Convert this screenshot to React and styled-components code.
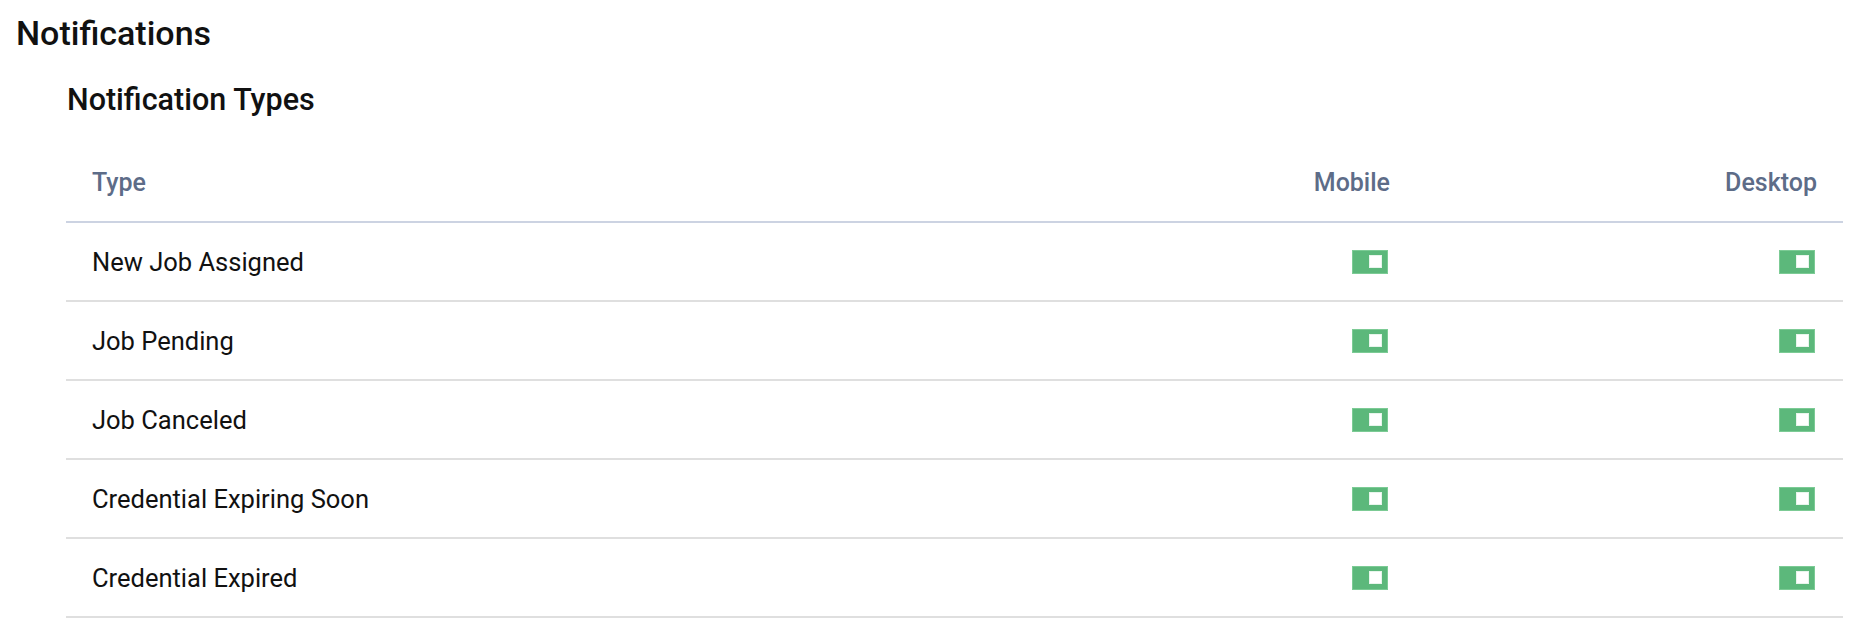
import styled, { createGlobalStyle } from "styled-components";

const GlobalStyle = createGlobalStyle`
  body {
    margin: 0;
    background: #fff;
    font-family: Roboto, "Liberation Sans", Arial, sans-serif;
    color: #111;
  }
`;

const types = [
  { name: "New Job Assigned", mobile: true, desktop: true },
  { name: "Job Pending", mobile: true, desktop: true },
  { name: "Job Canceled", mobile: true, desktop: true },
  { name: "Credential Expiring Soon", mobile: true, desktop: true },
  { name: "Credential Expired", mobile: true, desktop: true },
];

const App = () => {
  return (
    <Page>
      <GlobalStyle />
      <Title>Notifications</Title>
      <Section>
        <SubTitle>Notification Types</SubTitle>
        <Table>
          <HeaderRow>
            <HeaderCell>Type</HeaderCell>
            <HeaderCell $right>Mobile</HeaderCell>
            <HeaderCell $right>Desktop</HeaderCell>
          </HeaderRow>
          {types.map((t) => (
            <Row key={t.name}>
              <Cell>{t.name}</Cell>
              <Cell $right>
                <Toggle $on={t.mobile} role="switch" aria-checked={t.mobile}>
                  <Knob />
                </Toggle>
              </Cell>
              <Cell $right>
                <Toggle $on={t.desktop} role="switch" aria-checked={t.desktop}>
                  <Knob />
                </Toggle>
              </Cell>
            </Row>
          ))}
        </Table>
      </Section>
    </Page>
  );
};

export default App;

const Page = styled.div`
  padding: 13px 33px 0 16px;
`;

const Title = styled.h1`
  margin: 0;
  font-size: 34px;
  line-height: 40px;
  font-weight: 500;
  color: #111;
`;

const Section = styled.section`
  padding-left: 50px;
`;

const SubTitle = styled.h2`
  margin: 29px 0 0 1px;
  font-size: 30.5px;
  line-height: 36px;
  font-weight: 500;
  color: #111;
`;

const Table = styled.div`
  margin-top: 26px;
  display: flex;
  flex-direction: column;
`;

const HeaderRow = styled.div`
  display: grid;
  grid-template-columns: 1fr 400px 427px;
  align-items: center;
  height: 77px;
  border-bottom: 2px solid #ccd3e2;
`;

const Row = styled(HeaderRow)`
  border-bottom-color: #dfdfdf;
`;

const HeaderCell = styled.div`
  padding: 0 26px;
  font-size: 25px;
  font-weight: 500;
  color: #5d6c88;
  text-align: ${(p) => (p.$right ? "right" : "left")};
`;

const Cell = styled.div`
  padding: 0 26px;
  font-size: 25.5px;
  color: #111;
  display: flex;
  justify-content: ${(p) => (p.$right ? "flex-end" : "flex-start")};
  align-items: center;
`;

const Toggle = styled.span`
  box-sizing: border-box;
  width: 36px;
  height: 24px;
  margin-right: 2px;
  display: flex;
  align-items: center;
  justify-content: ${(p) => (p.$on ? "flex-end" : "flex-start")};
  padding: 0 5px;
  background: ${(p) => (p.$on ? "#5cb87b" : "#ccc")};
  border: 1px solid ${(p) => (p.$on ? "#7ccb95" : "#bbb")};
`;

const Knob = styled.span`
  box-sizing: border-box;
  width: 13px;
  height: 13px;
  background: #fff;
  border: 1px solid #e8f5ec;
`;
